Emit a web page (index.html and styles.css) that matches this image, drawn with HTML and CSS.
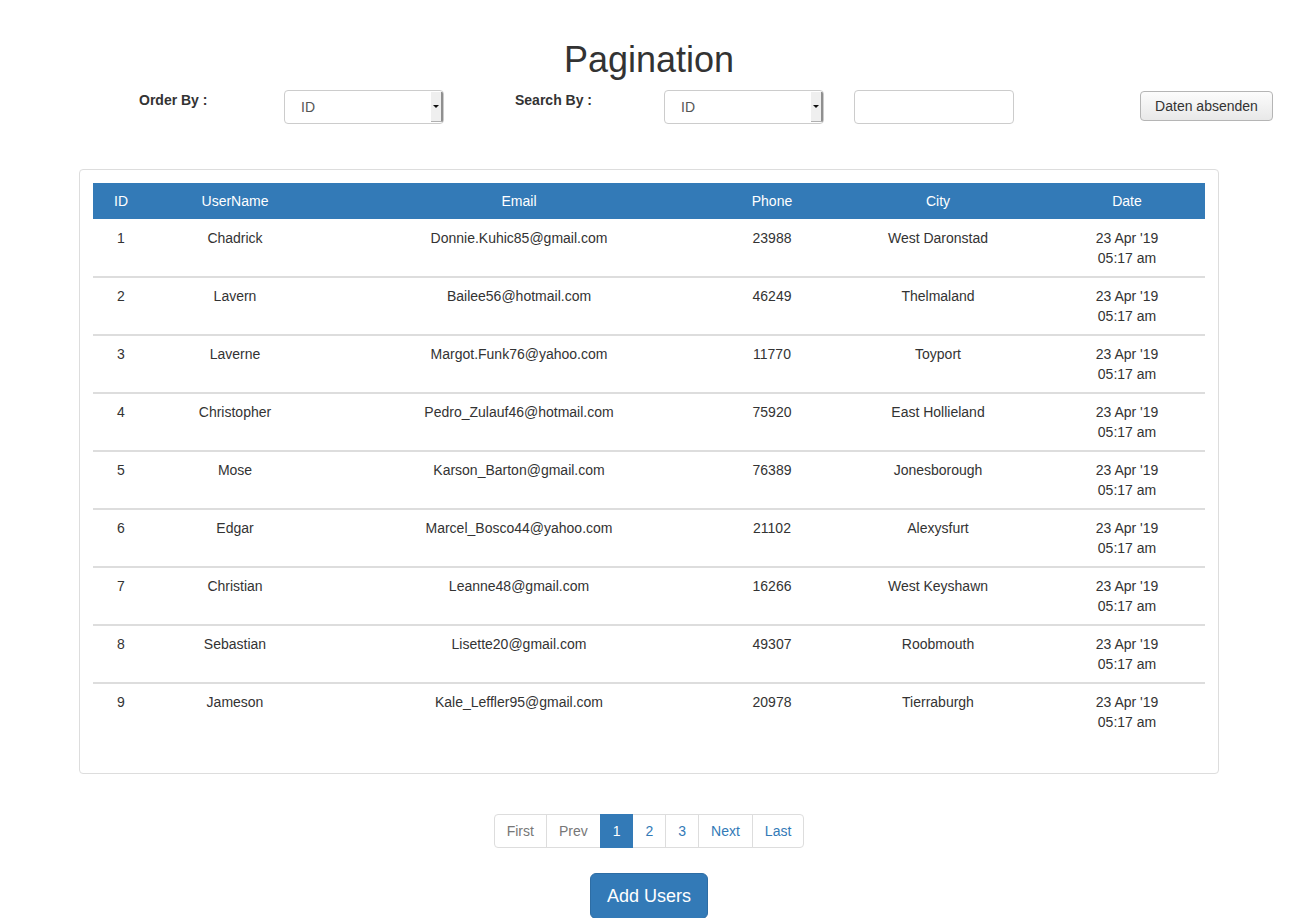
FILE: index.html
```html
<!DOCTYPE html>
<html lang="de">
<head>
<meta charset="utf-8">
<title>Pagination</title>
<link rel="stylesheet" href="styles.css">
</head>
<body>
<div class="page">
  <h1 class="title">Pagination</h1>

  <form class="controls">
    <label class="ctl-label ctl-label-order">Order By :</label>
    <div class="select select-order"><span class="select-value">ID</span><span class="select-arrow"></span></div>
    <label class="ctl-label ctl-label-search">Search By :</label>
    <div class="select select-search"><span class="select-value">ID</span><span class="select-arrow"></span></div>
    <input class="text-input" type="text">
    <button class="submit-btn" type="button">Daten absenden</button>
  </form>

  <div class="panel">
    <table class="users">
      <colgroup>
        <col class="c-id"><col class="c-user"><col class="c-email"><col class="c-phone"><col class="c-city"><col class="c-date">
      </colgroup>
      <thead>
        <tr><th>ID</th><th>UserName</th><th>Email</th><th>Phone</th><th>City</th><th>Date</th></tr>
      </thead>
      <tbody>
        <tr><td>1</td><td>Chadrick</td><td>Donnie.Kuhic85@gmail.com</td><td>23988</td><td>West Daronstad</td><td>23 Apr '19<br>05:17 am</td></tr>
        <tr><td>2</td><td>Lavern</td><td>Bailee56@hotmail.com</td><td>46249</td><td>Thelmaland</td><td>23 Apr '19<br>05:17 am</td></tr>
        <tr><td>3</td><td>Laverne</td><td>Margot.Funk76@yahoo.com</td><td>11770</td><td>Toyport</td><td>23 Apr '19<br>05:17 am</td></tr>
        <tr><td>4</td><td>Christopher</td><td>Pedro_Zulauf46@hotmail.com</td><td>75920</td><td>East Hollieland</td><td>23 Apr '19<br>05:17 am</td></tr>
        <tr><td>5</td><td>Mose</td><td>Karson_Barton@gmail.com</td><td>76389</td><td>Jonesborough</td><td>23 Apr '19<br>05:17 am</td></tr>
        <tr><td>6</td><td>Edgar</td><td>Marcel_Bosco44@yahoo.com</td><td>21102</td><td>Alexysfurt</td><td>23 Apr '19<br>05:17 am</td></tr>
        <tr><td>7</td><td>Christian</td><td>Leanne48@gmail.com</td><td>16266</td><td>West Keyshawn</td><td>23 Apr '19<br>05:17 am</td></tr>
        <tr><td>8</td><td>Sebastian</td><td>Lisette20@gmail.com</td><td>49307</td><td>Roobmouth</td><td>23 Apr '19<br>05:17 am</td></tr>
        <tr><td>9</td><td>Jameson</td><td>Kale_Leffler95@gmail.com</td><td>20978</td><td>Tierraburgh</td><td>23 Apr '19<br>05:17 am</td></tr>
      </tbody>
    </table>
  </div>

  <nav class="pager-wrap">
    <ul class="pagination">
      <li class="pg disabled first-item">First</li>
      <li class="pg disabled">Prev</li>
      <li class="pg active">1</li>
      <li class="pg">2</li>
      <li class="pg">3</li>
      <li class="pg">Next</li>
      <li class="pg last-item">Last</li>
    </ul>
  </nav>

  <div class="add-wrap">
    <button class="add-btn" type="button">Add Users</button>
  </div>
</div>
</body>
</html>
```

FILE: styles.css
```css
html, body {
  margin: 0;
  padding: 0;
  background: #fff;
}

body {
  font-family: "Liberation Sans", Arial, Helvetica, sans-serif;
  font-size: 14px;
  line-height: 20px;
  color: #333;
}

.page {
  width: 1298px;
}

.title {
  margin: 40px 0 10px;
  font-size: 36px;
  line-height: 40px;
  font-weight: normal;
  text-align: center;
  color: #333;
}

/* ---------- controls row ---------- */
.controls {
  display: flex;
  align-items: flex-start;
  padding-left: 139px;
  margin: 0;
  height: 34px;
}

.ctl-label {
  font-weight: bold;
  line-height: 20px;
  color: #333;
}

.ctl-label-order { width: 145px; }
.ctl-label-search { width: 149px; }

.select {
  box-sizing: border-box;
  width: 160px;
  height: 34px;
  border: 1px solid #ccc;
  border-radius: 4px;
  background: #fff;
  display: flex;
  align-items: stretch;
  overflow: hidden;
}

.select-order { margin-right: 71px; }
.select-search { margin-right: 30px; }

.select-value {
  flex: 1;
  padding-left: 16px;
  line-height: 32px;
  color: #555;
}

.select-arrow {
  position: relative;
  width: 10px;
  margin: 1px 0 1px;
  background: #efefef;
  border-right: 2px solid #8f8f8f;
  border-bottom: 1px solid #b0b0b0;
}

.select-arrow::after {
  content: "";
  position: absolute;
  left: 2px;
  top: 13px;
  border-left: 3px solid transparent;
  border-right: 3px solid transparent;
  border-top: 3px solid #111;
}

.text-input {
  box-sizing: border-box;
  width: 160px;
  height: 34px;
  margin: 0 126px 0 0;
  padding: 6px 12px;
  border: 1px solid #ccc;
  border-radius: 4px;
  font: inherit;
  background: #fff;
}

.submit-btn {
  box-sizing: border-box;
  width: 133px;
  height: 30px;
  margin-top: 1px;
  padding: 4px 0;
  border: 1px solid #b5b5b5;
  border-radius: 4px;
  background: linear-gradient(#fcfcfc, #e8e8e8);
  font-family: "Liberation Sans", Arial, sans-serif;
  font-size: 14px;
  line-height: 20px;
  color: #333;
}

/* ---------- panel / table ---------- */
.panel {
  box-sizing: border-box;
  width: 1140px;
  margin: 45px auto 0;
  padding: 13px;
  border: 1px solid #ddd;
  border-radius: 4px;
  background: #fff;
}

.users {
  width: 1112px;
  border-collapse: collapse;
  table-layout: fixed;
  margin-bottom: 20px;
}

.c-id { width: 56px; }
.c-user { width: 172px; }
.c-email { width: 396px; }
.c-phone { width: 110px; }
.c-city { width: 222px; }
.c-date { width: 156px; }

.users th {
  background: #337ab7;
  color: #fff;
  font-weight: normal;
  text-align: center;
  padding: 8px;
  line-height: 20px;
}

.users td {
  text-align: center;
  vertical-align: top;
  padding: 9px 8px 8px;
  line-height: 20px;
  color: #333;
}

.users tbody tr + tr td {
  border-top: 2px solid #ddd;
  padding-top: 8px;
}

/* ---------- pagination ---------- */
.pager-wrap {
  display: flex;
  justify-content: center;
  margin-top: 40px;
}

.pagination {
  display: flex;
  list-style: none;
  margin: 0;
  padding: 0;
}

.pg {
  padding: 6px 12px;
  line-height: 20px;
  border: 1px solid #ddd;
  margin-left: -1px;
  color: #337ab7;
  background: #fff;
}

.pg.first-item {
  margin-left: 0;
  border-radius: 4px 0 0 4px;
}

.pg.last-item {
  border-radius: 0 4px 4px 0;
}

.pg.disabled {
  color: #777;
}

.pg.active {
  background: #337ab7;
  border-color: #337ab7;
  color: #fff;
  position: relative;
}

.add-wrap {
  display: flex;
  justify-content: center;
  margin-top: 25px;
}

.add-btn {
  padding: 10px 16px;
  font-family: "Liberation Sans", Arial, sans-serif;
  font-size: 18px;
  line-height: 24px;
  color: #fff;
  background: #337ab7;
  border: 1px solid #2e6da4;
  border-radius: 6px;
}
```
